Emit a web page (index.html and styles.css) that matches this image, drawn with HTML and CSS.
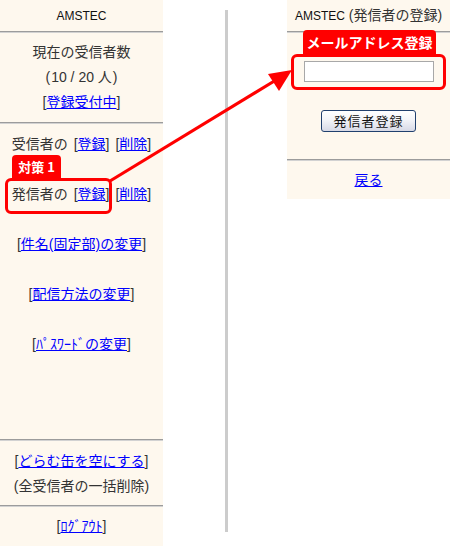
FILE: index.html
```html
<!DOCTYPE html>
<html lang="ja">
<head>
<meta charset="utf-8">
<title>AMSTEC</title>
<link rel="stylesheet" href="styles.css">
</head>
<body>
<div class="page">
  <div class="panel left">
    <div class="head"><span class="latin">AMSTEC</span></div>
    <div class="rule"></div>
    <div class="sec count">
      <div class="line">現在の受信者数</div>
      <div class="line"><span class="paren open">(</span>10 / 20 人<span class="paren close">)</span></div>
      <div class="line"><span class="br">[</span><a href="#">登録受付中</a><span class="br">]</span></div>
    </div>
    <div class="rule"></div>
    <div class="sec menu">
      <div class="line spaced">受信者の <span class="br">[</span><a href="#">登録</a><span class="br">]</span> <span class="br">[</span><a href="#">削除</a><span class="br">]</span></div>
      <div class="line spaced">発信者の <span class="br">[</span><a href="#">登録</a><span class="br">]</span> <span class="br">[</span><a href="#">削除</a><span class="br">]</span></div>
      <div class="line"><span class="br">[</span><a href="#">件名(固定部)の変更</a><span class="br">]</span></div>
      <div class="line"><span class="br">[</span><a href="#">配信方法の変更</a><span class="br">]</span></div>
      <div class="line"><span class="br">[</span><a href="#">ﾊﾟｽﾜｰﾄﾞの変更</a><span class="br">]</span></div>
    </div>
    <div class="rule"></div>
    <div class="sec trash">
      <div class="line"><span class="br">[</span><a href="#">どらむ缶を空にする</a><span class="br">]</span></div>
      <div class="line">(全受信者の一括削除)</div>
    </div>
    <div class="rule"></div>
    <div class="sec logout">
      <div class="line"><span class="br">[</span><a href="#">ﾛｸﾞｱｳﾄ</a><span class="br">]</span></div>
    </div>
  </div>

  <div class="gutter"><div class="vbar"></div></div>

  <div class="panel right">
    <div class="head"><span class="latin">AMSTEC</span> (発信者の登録)</div>
    <div class="rule"></div>
    <div class="form">
      <input class="mail" type="text">
      <button class="submit" type="button">発信者登録</button>
    </div>
    <div class="rule"></div>
    <div class="back"><a href="#">戻る</a></div>
  </div>

  <div class="tag tag-left">対策 1</div>
  <div class="frame frame-left"></div>
  <div class="tag tag-right">メールアドレス登録</div>
  <div class="frame frame-right"></div>

  <svg class="arrow" width="450" height="546" viewBox="0 0 450 546">
    <line x1="110" y1="181" x2="276" y2="80" stroke="#ff0000" stroke-width="3.2"/>
    <polygon points="292,70 268,74 279,91" fill="#ff0000"/>
  </svg>
</div>
</body>
</html>
```

FILE: styles.css
```css
html, body {
  margin: 0;
  padding: 0;
  background: #ffffff;
}

body {
  font-family: "Liberation Sans", "Noto Sans CJK JP", sans-serif;
  font-size: 14px;
  color: #333333;
}

.page {
  position: relative;
  width: 450px;
  height: 546px;
  display: flex;
  align-items: flex-start;
  overflow: hidden;
}

.panel {
  width: 163px;
  background: #fef8ee;
  text-align: center;
  flex: none;
}

.left {
  height: 546px;
}

.right {
  height: 199px;
}

.head {
  height: 31px;
  line-height: 30px;
  white-space: nowrap;
}

.latin {
  font-size: 12px;
  color: #111;
}

.rule {
  height: 1px;
  border-top: 1px solid #9c9c9c;
  background: #d2d2d2;
}

.line {
  line-height: 25px;
  height: 25px;
  white-space: nowrap;
}

.paren {
  display: inline-block;
  width: 14px;
}

.paren.open {
  text-align: right;
  margin-right: 1px;
}

.paren.close {
  text-align: left;
  margin-left: 1px;
}

.spaced {
  word-spacing: 2px;
}

.sec.count {
  height: 89px;
  box-sizing: border-box;
  padding-top: 7px;
}

.sec.menu {
  height: 315px;
  box-sizing: border-box;
  padding-top: 8px;
  display: flex;
  flex-direction: column;
  gap: 25px;
}

.sec.trash {
  height: 64px;
  box-sizing: border-box;
  padding-top: 8px;
}

.sec.logout {
  padding-top: 7px;
}

a {
  color: #0000ff;
  text-decoration: underline;
}

.br {
  color: #333333;
}

.gutter {
  width: 124px;
  flex: none;
}

.vbar {
  margin: 10px 0 0 62px;
  width: 3px;
  height: 522px;
  background: #cccccc;
}

.form {
  height: 126px;
  box-sizing: border-box;
  padding-top: 28px;
  display: flex;
  flex-direction: column;
  align-items: center;
}

.mail {
  width: 130px;
  height: 21px;
  box-sizing: border-box;
  border: 1px solid #a8a8a8;
  background: #ffffff;
  margin: 0;
  padding: 0;
}

.submit {
  margin-top: 28px;
  width: 95px;
  height: 22px;
  box-sizing: border-box;
  border: 1px solid #21406e;
  border-radius: 3px;
  background: linear-gradient(#ffffff, #f3f4f8 45%, #d7d9e6);
  font-family: "Noto Sans CJK JP", sans-serif;
  font-size: 13px;
  color: #111;
  padding: 0;
  line-height: 20px;
  letter-spacing: 1px;
}

.back {
  height: 38px;
  line-height: 38px;
}

.tag {
  position: absolute;
  background: #ff0000;
  color: #ffffff;
  font-family: "Noto Sans CJK JP", sans-serif;
  font-weight: bold;
  text-align: center;
  border-radius: 4px 4px 0 0;
  white-space: nowrap;
  z-index: 2;
}

.tag-left {
  left: 12px;
  top: 155px;
  width: 49px;
  height: 24px;
  line-height: 23px;
  font-size: 13px;
}

.tag-right {
  left: 303px;
  top: 30px;
  width: 133px;
  height: 25px;
  line-height: 25px;
  font-size: 14px;
}

.frame {
  position: absolute;
  box-sizing: border-box;
  border: 3px solid #ff0000;
  border-radius: 6px;
  z-index: 2;
}

.frame-left {
  left: 5px;
  top: 178px;
  width: 107px;
  height: 36px;
}

.frame-right {
  left: 291px;
  top: 54px;
  width: 155px;
  height: 36px;
}

.arrow {
  position: absolute;
  left: 0;
  top: 0;
  pointer-events: none;
  z-index: 3;
}
```
